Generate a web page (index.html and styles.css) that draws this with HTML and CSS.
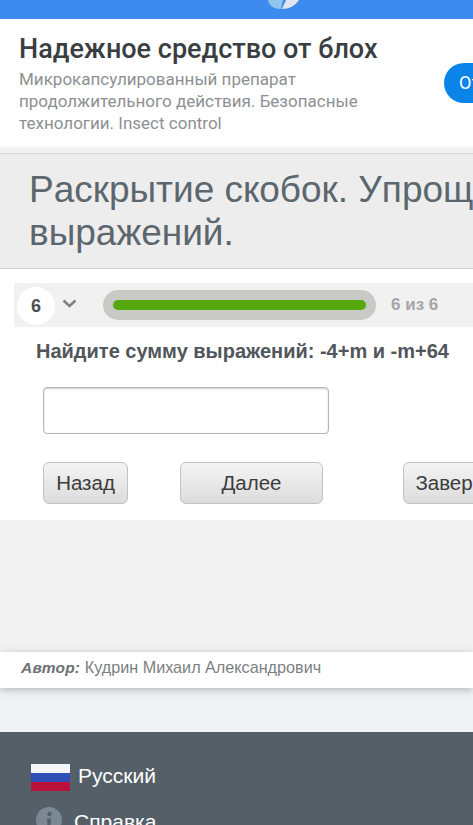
FILE: index.html
```html
<!DOCTYPE html>
<html lang="ru">
<head>
    <meta charset="UTF-8">
    <meta name="viewport" content="width=device-width, initial-scale=1.0">
    <title>Раскрытие скобок</title>
    <link rel="stylesheet" href="styles.css">
</head>
<body>
    <!-- Top bar -->
    <div class="top-bar">
        <svg class="top-logo" width="34" height="10" viewBox="0 0 34 10">
            <path d="M1 0 C2 6 7 9 14 9 L16 0 Z" fill="#8fc4ee"/>
            <path d="M15 9 C22 9 28 6 32 0 L19 0 Z" fill="#dfe6ee"/>
        </svg>
    </div>

    <!-- Ad -->
    <div class="ad">
        <div class="ad-text">
            <h2>Надежное средство от блох</h2>
            <p>Микрокапсулированный препарат продолжительного действия. Безопасные технологии. Insect control</p>
        </div>
        <div class="ad-button">Открыть</div>
    </div>

    <!-- Title -->
    <div class="title-box">
        <h1>Раскрытие скобок. Упрощение выражений.</h1>
    </div>

    <!-- Test -->
    <div class="test">
        <div class="progress-section">
            <span class="question-number">6</span>
            <svg class="chevron" width="15" height="9" viewBox="0 0 15 9">
                <path d="M1.5 1.5 L7.5 7 L13.5 1.5" fill="none" stroke="#7d8184" stroke-width="2.4"/>
            </svg>
            <div class="progress-track">
                <div class="progress-bar"></div>
            </div>
            <span class="progress-text">6 из 6</span>
        </div>
        <p class="question">Найдите сумму выражений: -4+m и -m+64</p>
        <input class="answer" type="text">
        <div class="buttons">
            <button class="btn btn-back">Назад</button>
            <button class="btn btn-next">Далее</button>
            <button class="btn btn-finish">Завершить</button>
        </div>
    </div>

    <div class="spacer"></div>

    <!-- Author -->
    <div class="author"><b>Автор:</b> Кудрин Михаил Александрович</div>

    <div class="gap"></div>

    <!-- Footer -->
    <footer>
        <div class="footer-row">
            <svg class="flag" width="39" height="27" viewBox="0 0 39 27">
                <rect width="39" height="9" fill="#f4f5f8"/>
                <rect y="9" width="39" height="9" fill="#2f4fb5"/>
                <rect y="18" width="39" height="9" fill="#b9113a"/>
            </svg>
            <span>Русский</span>
        </div>
        <div class="footer-row footer-help">
            <svg class="info" width="26" height="26" viewBox="0 0 26 26">
                <circle cx="13" cy="13" r="13" fill="#7b8894"/>
                <circle cx="13.5" cy="7" r="2.2" fill="#545f68"/>
                <path d="M11 11.5 H15 L14.5 20 H11.5 Z" fill="#545f68"/>
            </svg>
            <span>Справка</span>
        </div>
    </footer>
</body>
</html>
```

FILE: styles.css
```css
/* General Styles */
html, body {
    height: 100%;
    margin: 0;
    padding: 0;
}
body {
    width: 473px;
    height: 825px;
    overflow: hidden;
    background-color: #f1f2f4;
    font-family: "Liberation Sans", Arial, sans-serif;
}

/* Top bar */
.top-bar {
    height: 19px;
    background-color: #3d8bee;
    display: flex;
    justify-content: center;
}
.top-logo {
    margin-left: 94px;
}

/* Ad */
.ad {
    height: 128px;
    background-color: #fff;
    box-sizing: border-box;
    padding: 15px 0 0 19px;
    display: flex;
    justify-content: space-between;
    align-items: flex-start;
    overflow: hidden;
}
.ad-text {
    flex: none;
    width: 400px;
}
.ad h2 {
    margin: 0;
    font-family: Roboto, sans-serif;
    font-size: 27px;
    font-weight: 500;
    line-height: 30px;
    color: #393e42;
}
.ad p {
    margin: 4px 0 0;
    width: 370px;
    font-family: Roboto, sans-serif;
    font-size: 17px;
    line-height: 22px;
    color: #8d9093;
}
.ad-button {
    flex: none;
    margin-top: 29px;
    width: 100px;
    height: 40px;
    margin-right: -71px;
    box-sizing: border-box;
    padding-left: 15px;
    border-radius: 20px;
    background-color: #0a84e8;
    color: #fff;
    font-family: Roboto, sans-serif;
    font-size: 18px;
    line-height: 40px;
}

/* Title */
.title-box {
    margin-top: 6px;
    height: 116px;
    box-sizing: border-box;
    background-color: #ededee;
    border-top: 1px solid #d5d6d7;
    border-bottom: 1px solid #cfd0d1;
    padding: 14px 0 0 29px;
    overflow: hidden;
}
.title-box h1 {
    margin: 0;
    width: 570px;
    font-size: 37px;
    font-weight: 400;
    font-kerning: none;
    line-height: 43px;
    color: #5c666d;
}

/* Test */
.test {
    height: 251px;
    box-sizing: border-box;
    background-color: #fff;
    padding-top: 14px;
    overflow: hidden;
}
.progress-section {
    margin-left: 14px;
    height: 44px;
    background-color: #f1f1f1;
    display: flex;
    align-items: center;
}
.question-number {
    flex: none;
    width: 38px;
    height: 38px;
    margin-left: 3px;
    margin-top: 1px;
    border-radius: 50%;
    background-color: #fff;
    text-align: center;
    font-size: 18px;
    font-weight: 700;
    line-height: 38px;
    color: #4a4f53;
}
.chevron {
    margin-left: 7px;
    margin-bottom: 3px;
}
.progress-track {
    flex: none;
    width: 273px;
    height: 30px;
    margin-left: 26px;
    box-sizing: border-box;
    padding: 10px;
    border-radius: 15px;
    background-color: #c9c9c6;
}
.progress-bar {
    height: 10px;
    border-radius: 5px;
    background-color: #55a80e;
}
.progress-text {
    margin-left: 15px;
    font-size: 17px;
    font-weight: 700;
    color: #a3a5a6;
}
.question {
    margin: 12px 0 0 36px;
    font-size: 20px;
    font-weight: 700;
    line-height: 24px;
    color: #50565b;
    white-space: nowrap;
}
.answer {
    display: block;
    box-sizing: border-box;
    margin: 24px 0 0 43px;
    width: 286px;
    height: 47px;
    border: 1px solid #b5b5b5;
    border-radius: 4px;
    background-color: #fff;
    box-shadow: inset 0 1px 2px rgba(0, 0, 0, 0.2);
}
.buttons {
    margin: 28px 0 0 43px;
    display: flex;
}
.btn {
    flex: none;
    box-sizing: border-box;
    height: 42px;
    padding: 0;
    border: 1px solid #c2c2c2;
    border-radius: 6px;
    background: linear-gradient(#f4f4f4, #dcdcdc);
    font-family: "Liberation Sans", Arial, sans-serif;
    font-size: 20.5px;
    color: #3c3c3c;
}
.btn-back {
    width: 85px;
}
.btn-next {
    width: 143px;
    margin-left: 52px;
}
.btn-finish {
    width: 130px;
    margin-left: 80px;
}

.spacer {
    height: 132px;
    background-color: #f2f2f2;
}

/* Author */
.author {
    height: 36px;
    background-color: #fff;
    box-sizing: border-box;
    padding-left: 21px;
    font-size: 16.2px;
    line-height: 31px;
    color: #7c7f82;
    box-shadow: 0 2px 8px rgba(0, 0, 0, 0.25);
    position: relative;
}
.author b {
    font-size: 15.5px;
    font-style: italic;
    letter-spacing: 0.2px;
    color: #6e7174;
}

.gap {
    height: 44px;
}

/* Footer */
footer {
    height: 100px;
    background-color: #545f68;
    color: #fff;
    font-size: 21px;
    overflow: hidden;
}
.footer-row {
    display: flex;
    align-items: center;
    gap: 8px;
    margin: 32px 0 0 31px;
}
.footer-row span {
    padding-bottom: 3px;
}
.footer-help {
    align-items: flex-start;
    margin: 16px 0 0 36px;
    gap: 12px;
}
.footer-help span {
    padding: 3px 0 0;
}
```
